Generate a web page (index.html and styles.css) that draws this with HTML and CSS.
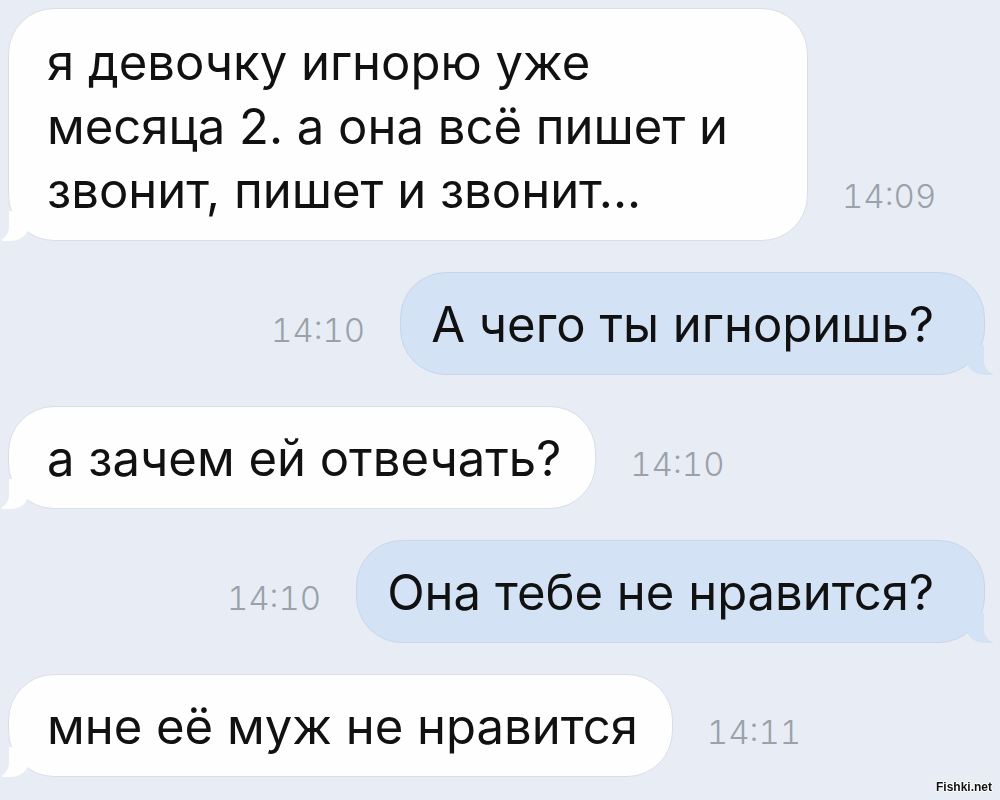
FILE: index.html
```html
<!DOCTYPE html>
<html lang="ru">

<head>
  <meta charset="UTF-8">
  <meta name="viewport" content="width=device-width, initial-scale=1.0">
  <title>Сообщения</title>
  <link rel="stylesheet" href="styles.css">
</head>

<body>
  <div class="chat">
    <div class="row in">
      <div class="bubble wide">я девочку игнорю уже<br>месяца 2. а она всё пишет и<br>звонит, пишет и звонит...</div>
      <span class="time">14:09</span>
    </div>

    <div class="row out">
      <span class="time">14:10</span>
      <div class="bubble">А чего ты игноришь?</div>
    </div>

    <div class="row in">
      <div class="bubble">а зачем ей отвечать?</div>
      <span class="time">14:10</span>
    </div>

    <div class="row out">
      <span class="time">14:10</span>
      <div class="bubble">Она тебе не нравится?</div>
    </div>

    <div class="row in">
      <div class="bubble">мне её муж не нравится</div>
      <span class="time">14:11</span>
    </div>
  </div>

  <div class="watermark">Fishki.net</div>
</body>

</html>
```

FILE: styles.css
```css
body {
  margin: 0;
  height: 800px;
  overflow: hidden;
  background-color: #e8edf5;
  font-family: Inter, "Liberation Sans", sans-serif;
  color: #111;
}

.chat {
  display: flex;
  flex-direction: column;
  gap: 31px;
  padding: 8px 15px 0 8px;
}

.row {
  display: flex;
  align-items: flex-end;
}

.row.out {
  justify-content: flex-end;
}

/* пузырь сообщения */
.bubble {
  position: relative;
  font-size: 49px;
  line-height: 64px;
  padding: 20px 34px 17px 38px;
  border-radius: 46px;
  background-color: #fefefe;
  border: 1px solid #d9dee6;
}

.bubble.wide {
  width: 800px;
  box-sizing: border-box;
  padding-top: 22px;
}

.out .bubble {
  background-color: #d4e2f6;
  border-color: #c9d6ea;
  padding: 20px 50px 17px 30px;
}

/* хвостики */
.in .bubble::before {
  content: "";
  position: absolute;
  left: -7px;
  bottom: -1px;
  width: 26px;
  height: 30px;
  background-color: #fefefe;
  border-bottom-right-radius: 18px 14px;
}

.in .bubble::after {
  content: "";
  position: absolute;
  left: -26px;
  bottom: -1px;
  width: 26px;
  height: 32px;
  background-color: #e8edf5;
  border-bottom-right-radius: 14px;
}

.out .bubble::before {
  content: "";
  position: absolute;
  right: -9px;
  bottom: -1px;
  width: 26px;
  height: 30px;
  background-color: #d4e2f6;
  border-bottom-left-radius: 18px 14px;
}

.out .bubble::after {
  content: "";
  position: absolute;
  right: -28px;
  bottom: -1px;
  width: 28px;
  height: 32px;
  background-color: #e8edf5;
  border-bottom-left-radius: 14px;
}

.time {
  font-size: 33px;
  font-weight: 300;
  font-variant-numeric: tabular-nums;
  color: #9ba1a9;
  padding-bottom: 25px;
}

.in .time {
  margin-left: 34px;
}

.out .time {
  margin-right: 35px;
}

.watermark {
  position: fixed;
  right: 8px;
  bottom: 6px;
  font-family: "Liberation Sans", sans-serif;
  font-size: 12px;
  font-weight: bold;
  color: #111;
  text-shadow: 1px 0 #fff, -1px 0 #fff, 0 1px #fff, 0 -1px #fff;
}
```
